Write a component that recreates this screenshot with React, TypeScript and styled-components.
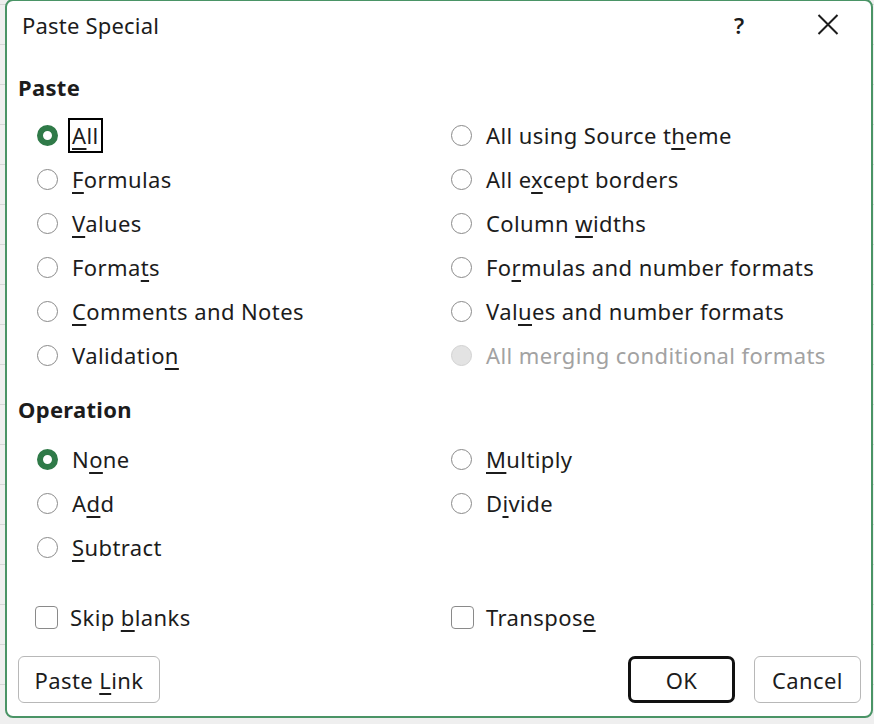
import React from 'react';
import styled, { createGlobalStyle, css } from 'styled-components';

const GlobalStyle = createGlobalStyle`
  html, body {
    margin: 0;
    padding: 0;
  }
  body {
    background-color: #efefef;
    background-image: repeating-linear-gradient(
      to bottom,
      transparent 0px,
      transparent 4px,
      #d6d6d6 4px,
      #d6d6d6 5px,
      transparent 5px,
      transparent 40px
    );
    font-family: "Noto Sans", "Open Sans", sans-serif;
    color: #1c1c1c;
  }
`;

interface Option {
  label: string;
  key?: number;
  checked?: boolean;
  disabled?: boolean;
  focused?: boolean;
}

const pasteLeft: Option[] = [
  { label: 'All', key: 0, checked: true, focused: true },
  { label: 'Formulas', key: 0 },
  { label: 'Values', key: 0 },
  { label: 'Formats', key: 5 },
  { label: 'Comments and Notes', key: 0 },
  { label: 'Validation', key: 9 },
];

const pasteRight: Option[] = [
  { label: 'All using Source theme', key: 18 },
  { label: 'All except borders', key: 5 },
  { label: 'Column widths', key: 7 },
  { label: 'Formulas and number formats', key: 2 },
  { label: 'Values and number formats', key: 3 },
  { label: 'All merging conditional formats', disabled: true },
];

const opLeft: Option[] = [
  { label: 'None', key: 1, checked: true },
  { label: 'Add', key: 1 },
  { label: 'Subtract', key: 0 },
];

const opRight: Option[] = [
  { label: 'Multiply', key: 0 },
  { label: 'Divide', key: 1 },
];

function AccessText({ text, index }: { text: string; index?: number }) {
  if (index === undefined) return <span>{text}</span>;
  return (
    <span>
      {text.slice(0, index)}
      <Key>{text[index]}</Key>
      {text.slice(index + 1)}
    </span>
  );
}

function RadioOption({ option }: { option: Option }) {
  return (
    <RadioRow>
      <RadioDot checked={!!option.checked} disabled={!!option.disabled} />
      <OptionLabel disabled={!!option.disabled} focused={!!option.focused}>
        <AccessText text={option.label} index={option.key} />
      </OptionLabel>
    </RadioRow>
  );
}

function OptionColumn({ options }: { options: Option[] }) {
  return (
    <Column>
      {options.map((o) => <RadioOption key={o.label} option={o} />)}
    </Column>
  );
}

export default function App() {
  return (
    <>
      <GlobalStyle />
      <Desktop>
        <Dialog>
          <TitleBar>
            <Title>Paste Special</Title>
            <TitleButtons>
              <TitleButton><HelpGlyph>?</HelpGlyph></TitleButton>
              <TitleButton>
                <svg width="22" height="21" viewBox="0 0 22 21">
                  <path d="M1.5 1 L20.5 20 M20.5 1 L1.5 20" stroke="#1c1c1c" strokeWidth="2" fill="none" />
                </svg>
              </TitleButton>
            </TitleButtons>
          </TitleBar>

          <Body>
            <SectionTitle first>Paste</SectionTitle>
            <OptionGrid>
              <OptionColumn options={pasteLeft} />
              <OptionColumn options={pasteRight} />
            </OptionGrid>

            <SectionTitle>Operation</SectionTitle>
            <OptionGrid>
              <OptionColumn options={opLeft} />
              <OptionColumn options={opRight} />
            </OptionGrid>

            <CheckGrid>
              <CheckRow>
                <CheckBox />
                <OptionLabel><AccessText text="Skip blanks" index={5} /></OptionLabel>
              </CheckRow>
              <CheckRow>
                <CheckBox />
                <OptionLabel><AccessText text="Transpose" index={8} /></OptionLabel>
              </CheckRow>
            </CheckGrid>

            <Footer>
              <Button width={142}><AccessText text="Paste Link" index={6} /></Button>
              <ButtonGroup>
                <Button width={107} primary>OK</Button>
                <Button width={107}>Cancel</Button>
              </ButtonGroup>
            </Footer>
          </Body>
        </Dialog>
      </Desktop>
    </>
  );
}

const TEXT_SIZE = '22px';
const TEXT_SPACING = '0.4px';

const Desktop = styled.div`
  height: 724px;
  overflow: hidden;
  padding-left: 5px;
`;

const Dialog = styled.div`
  box-sizing: border-box;
  width: 868px;
  height: 719px;
  margin-top: -1px;
  background: #ffffff;
  border: 2px solid #4a9466;
  border-radius: 8px;
  display: flex;
  flex-direction: column;
`;

const TitleBar = styled.div`
  height: 47px;
  display: flex;
  align-items: center;
  padding-left: 15px;
  padding-right: 20px;
`;

const Title = styled.div`
  font-size: ${TEXT_SIZE};
  letter-spacing: 0.2px;
  color: #1c1c1c;
`;

const TitleButtons = styled.div`
  margin-left: auto;
  display: flex;
  gap: 43px;
`;

const TitleButton = styled.div`
  width: 46px;
  height: 36px;
  display: flex;
  align-items: center;
  justify-content: center;
`;

const HelpGlyph = styled.span`
  font-size: 22px;
  font-weight: 600;
  line-height: 1;
`;

const Body = styled.div`
  flex: 1;
  padding: 0 10px 0 11px;
  display: flex;
  flex-direction: column;
`;

const SectionTitle = styled.div<{ first?: boolean }>`
  height: 30px;
  line-height: 30px;
  font-size: ${TEXT_SIZE};
  font-weight: 700;
  letter-spacing: 0.3px;
  margin-top: ${({ first }) => (first ? '24px' : '17px')};
  margin-bottom: ${({ first }) => (first ? '11px' : '13px')};
`;

const OptionGrid = styled.div`
  display: grid;
  grid-template-columns: 414px 1fr;
  padding-left: 19px;
`;

const Column = styled.div`
  display: flex;
  flex-direction: column;
`;

const RadioRow = styled.div`
  height: 44px;
  display: flex;
  align-items: center;
  gap: 14px;
`;

const RadioDot = styled.span<{ checked: boolean; disabled: boolean }>`
  box-sizing: border-box;
  flex: none;
  width: 21px;
  height: 21px;
  border-radius: 50%;
  background: #ffffff;
  border: 1px solid #8a8a8a;
  ${({ checked }) => checked && css`
    border: 6px solid #2f7a48;
  `}
  ${({ disabled }) => disabled && css`
    background: #e3e3e3;
    border-color: #d2d2d2;
  `}
`;

const OptionLabel = styled.span<{ disabled?: boolean; focused?: boolean }>`
  font-size: ${TEXT_SIZE};
  letter-spacing: ${TEXT_SPACING};
  line-height: 31px;
  white-space: nowrap;
  color: ${({ disabled }) => (disabled ? '#a2a2a2' : '#1c1c1c')};
  border: 2px solid transparent;
  padding: 0 2px;
  margin-left: -4px;
  ${({ focused }) => focused && css`
    border-color: #000000;
  `}
`;

const Key = styled.span`
  text-decoration: underline;
  text-decoration-thickness: 1.5px;
  text-underline-offset: 4px;
`;

const CheckGrid = styled.div`
  display: grid;
  grid-template-columns: 416px 1fr;
  padding-left: 17px;
  margin-top: 26px;
`;

const CheckRow = styled.div`
  height: 44px;
  display: flex;
  align-items: center;
  gap: 12px;
`;

const CheckBox = styled.span`
  box-sizing: border-box;
  flex: none;
  width: 23px;
  height: 23px;
  border: 1.5px solid #8a8a8a;
  border-radius: 4px;
  background: #ffffff;
`;

const Footer = styled.div`
  margin-top: 17px;
  display: flex;
  justify-content: space-between;
  align-items: center;
`;

const ButtonGroup = styled.div`
  display: flex;
  gap: 19px;
`;

const Button = styled.div<{ width: number; primary?: boolean }>`
  box-sizing: border-box;
  width: ${({ width }) => width}px;
  height: 47px;
  display: flex;
  align-items: center;
  justify-content: center;
  font-size: ${TEXT_SIZE};
  letter-spacing: ${TEXT_SPACING};
  color: #1c1c1c;
  background: #ffffff;
  border: 1.5px solid #b8b8b8;
  border-radius: 6px;
  white-space: nowrap;
  ${({ primary }) => primary && css`
    border: 3px solid #111111;
    border-radius: 7px;
  `}
`;
